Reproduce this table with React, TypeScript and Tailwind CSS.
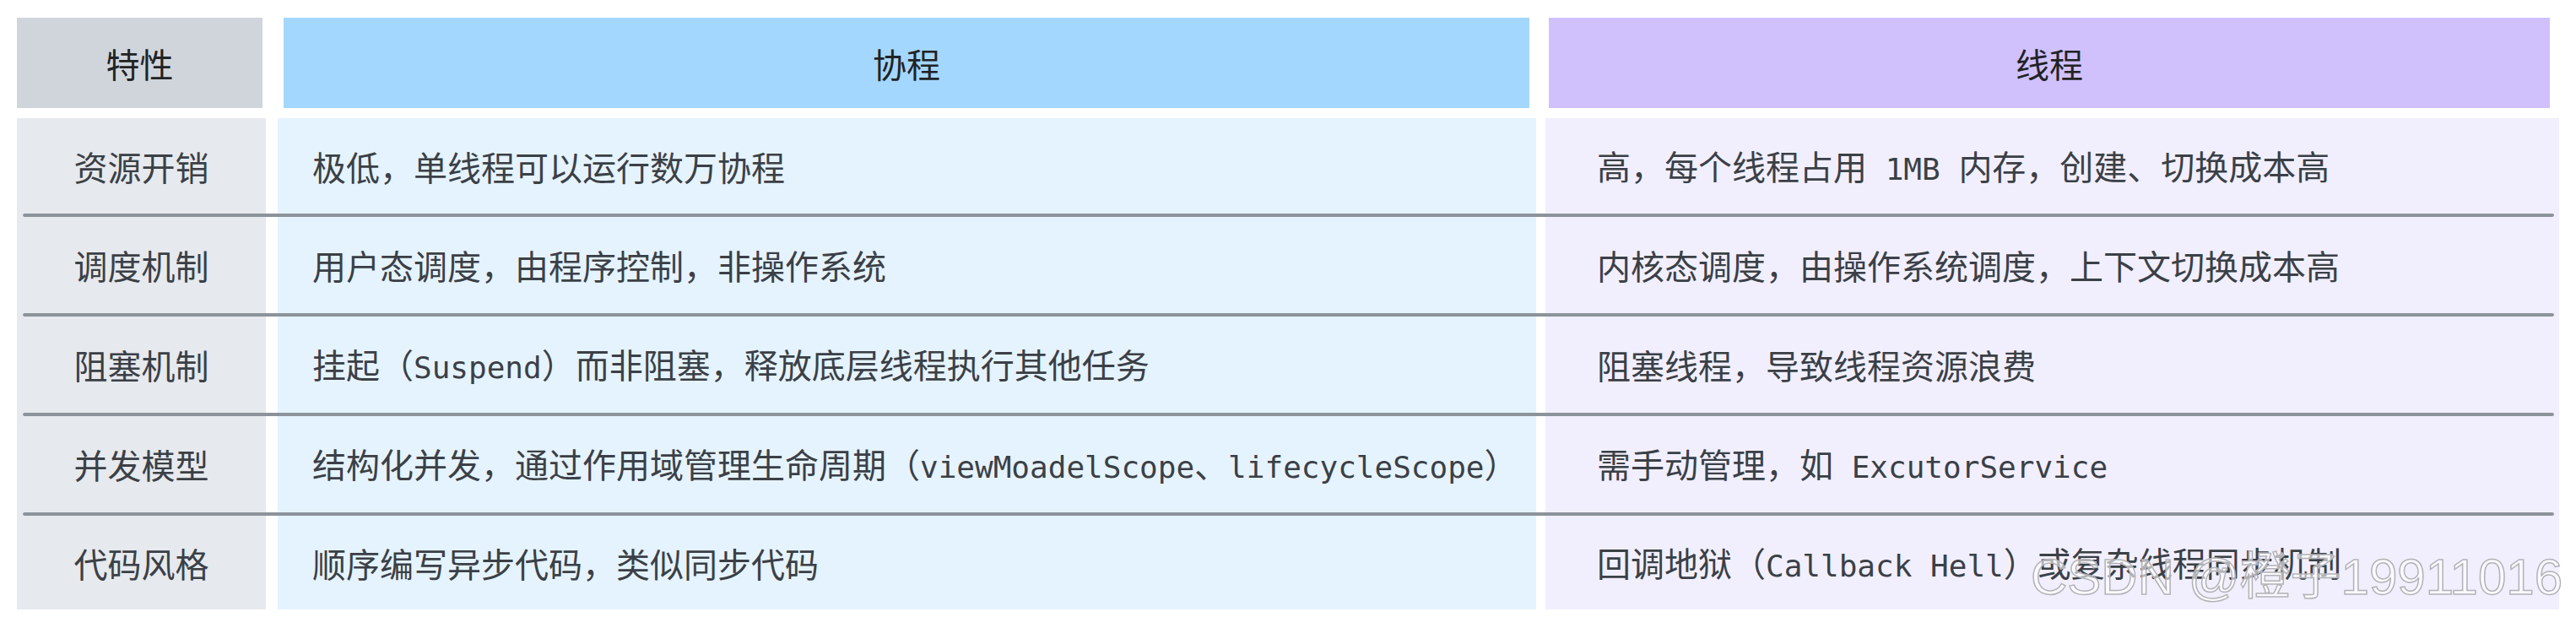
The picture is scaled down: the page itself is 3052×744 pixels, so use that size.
const rows = [
  {
    key: "资源开销",
    a: "极低，单线程可以运行数万协程",
    b: "高，每个线程占用` 1MB `内存，创建、切换成本高",
  },
  {
    key: "调度机制",
    a: "用户态调度，由程序控制，非操作系统",
    b: "内核态调度，由操作系统调度，上下文切换成本高",
  },
  {
    key: "阻塞机制",
    a: "挂起（`Suspend`）而非阻塞，释放底层线程执行其他任务",
    b: "阻塞线程，导致线程资源浪费",
  },
  {
    key: "并发模型",
    a: "结构化并发，通过作用域管理生命周期（`viewMoadelScope`、`lifecycleScope`）",
    b: "需手动管理，如` ExcutorService`",
  },
  {
    key: "代码风格",
    a: "顺序编写异步代码，类似同步代码",
    b: "回调地狱（`Callback Hell`）或复杂线程同步机制",
  },
];

const heights = ["h-[113px]", "h-[114px]", "h-[114px]", "h-[114px]", "h-[111px]"];

// backtick parts are code
function Rich({ text }: { text: string }) {
  return (
    <span>
      {text.split("`").map((part, i) =>
        i % 2 === 1 ? (
          <span key={i} className="whitespace-pre text-[36px] font-['DejaVu_Sans_Mono','Noto_Sans_CJK_SC',monospace]">
            {part}
          </span>
        ) : (
          <span key={i}>{part}</span>
        )
      )}
    </span>
  );
}

export default function App() {
  return (
    <div className="relative w-[3052px] h-[744px] overflow-hidden bg-white font-['Noto_Sans_CJK_SC',sans-serif]">
      {/* Header */}
      <div className="flex pt-[21px] pl-[20px] text-[40px] text-[#212325]">
        <div className="w-[291px] h-[107px] bg-[#d0d5dc] flex items-center justify-center">特性</div>
        <div className="ml-[25px] w-[1476px] h-[107px] bg-[#a4d7fd] flex items-center justify-center">协程</div>
        <div className="ml-[23px] w-[1186px] h-[107px] bg-[#d0c1fd] flex items-center justify-center">线程</div>
      </div>

      {/* Body */}
      <div className="mt-[12px] pl-[20px] text-[40px] text-[#3b4046]">
        {rows.map((r, i) => (
          <div key={r.key}>
            <div className={`flex ${heights[i]}`}>
              <div className="w-[295px] bg-[#e6e9ed] flex items-center justify-center">{r.key}</div>
              <div className="ml-[14px] w-[1491px] bg-[#e5f3fe] flex items-center pl-[41px] whitespace-nowrap">
                <Rich text={r.a} />
              </div>
              <div className="ml-[11px] w-[1201px] bg-[#f1effe] flex items-center pl-[61px] whitespace-nowrap">
                <Rich text={r.b} />
              </div>
            </div>
            {i < rows.length - 1 && (
              <div className="flex h-[4px]">
                <div className="w-[7px] bg-[#e6e9ed]" />
                <div className="w-[2999px] rounded-full bg-[#8c939a]" />
                <div className="w-[6px] bg-[#f1effe]" />
              </div>
            )}
          </div>
        ))}
      </div>

      {/* watermark */}
      <div className="absolute left-[2406px] top-[654px] text-[60px] leading-none whitespace-nowrap text-white/60 [-webkit-text-stroke:1.5px_#b3b3b6] font-['Liberation_Sans','Noto_Sans_CJK_SC',sans-serif]">
        CSDN @橙子19911016
      </div>
    </div>
  );
}
